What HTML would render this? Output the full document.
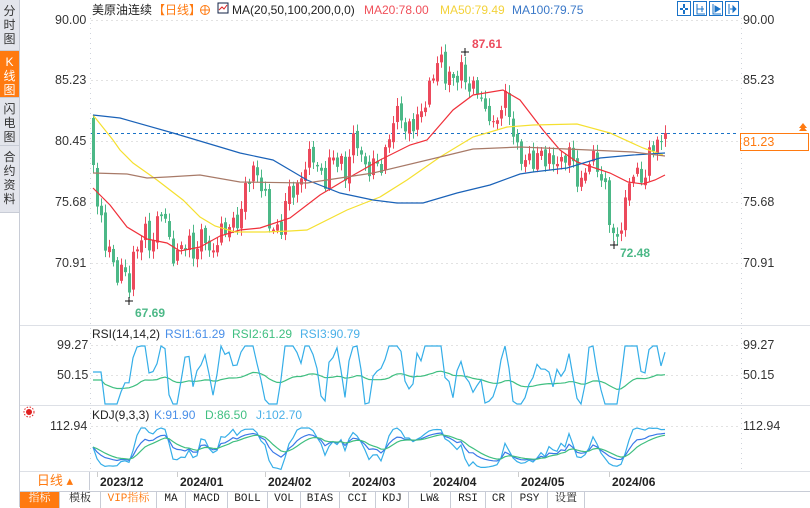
<!DOCTYPE html>
<html><head><meta charset="utf-8">
<style>
*{margin:0;padding:0;box-sizing:border-box}
body{width:810px;height:507px;overflow:hidden;background:#fff;font-family:"Liberation Sans","Noto Sans CJK SC",sans-serif;position:relative}
.side{position:absolute;left:0;top:0;width:20px;height:507px;background:#fff;border-right:1px solid #c8ccd6}
.tab{position:absolute;left:0;width:19px;background:#e3e5ec;color:#333;font-size:12px;line-height:14px;text-align:center;padding-top:4px;border-bottom:1px solid #c8ccd6}
.tab.on{background:#ff7a10;color:#fff}
.ax{position:absolute;font-size:12.5px;color:#333}
.bar{position:absolute;left:20px;top:491px;width:790px;height:16px;border-top:1px solid #c8ccd6;font-family:"Liberation Mono","Noto Serif CJK SC",monospace;font-size:11px}
.bar span{position:absolute;top:0;height:16px;line-height:15px;text-align:center;border-right:1px solid #c8ccd6;color:#222}
</style></head><body>
<div class="side">
<div class="tab" style="top:0;height:51px">分<br>时<br>图</div>
<div class="tab on" style="top:51px;height:47px">K<br>线<br>图</div>
<div class="tab" style="top:98px;height:48px">闪<br>电<br>图</div>
<div class="tab" style="top:146px;height:67px">合<br>约<br>资<br>料</div>
</div>
<svg id="s" width="810" height="507" style="position:absolute;left:0;top:0">
<g font-size="12" font-family="Liberation Sans,Noto Sans CJK SC,sans-serif">
<text x="92" y="14" fill="#222">美原油连续</text>
<text x="153" y="14" fill="#ff7a10">【日线】</text>
<circle cx="205" cy="10" r="4.5" fill="none" stroke="#ff7a10"/><path d="M200.5 10h9M205 5.5v9" stroke="#ff7a10"/>
<rect x="218" y="3" width="10" height="10" fill="#fff" stroke="#124" /><path d="M219 10l3-3 2 2 3-4" stroke="#d22" fill="none"/>
<text x="232" y="14" fill="#222">MA(20,50,100,200,0,0)</text>
<text x="364" y="14" fill="#f0505a">MA20:78.00</text>
<text x="440" y="14" fill="#f3d23a">MA50:79.49</text>
<text x="512" y="14" fill="#3a78c8">MA100:79.75</text>
<text x="92" y="338" fill="#222">RSI(14,14,2)</text>
<text x="165" y="338" fill="#4a8fe8">RSI1:61.29</text>
<text x="232" y="338" fill="#3fbf80">RSI2:61.29</text>
<text x="300" y="338" fill="#4ab0e8">RSI3:90.79</text>
<text x="92" y="419" fill="#222">KDJ(9,3,3)</text>
<text x="154" y="419" fill="#4a8fe8">K:91.90</text>
<text x="205" y="419" fill="#3fbf80">D:86.50</text>
<text x="256" y="419" fill="#4ab0e8">J:102.70</text>
</g>
<g fill="none" stroke="#1a73c8" stroke-width="1">
<rect x="677.5" y="1.5" width="13" height="14"/><rect x="693.5" y="1.5" width="13" height="14"/><rect x="709.5" y="1.5" width="13" height="14"/><rect x="725.5" y="1.5" width="13" height="14"/>
<path d="M684 4v4M684 10v4M680 9h3M685 9h3" stroke-width="2"/>
<path d="M697 4v10h8M697 9h7M702 6v6"/>
<path d="M713 4v10h8"/><path d="M715 6l5 3-5 3z" fill="#1a73c8"/>
<path d="M729 4v10"/><path d="M730 9h5M733 6l3 3-3 3z" fill="#1a73c8"/>
</g>
<g id="grid"></g>
<g id="ch"></g>
</svg>
<div class="ax" style="left:55px;top:13px">90.00</div>
<div class="ax" style="left:55px;top:73px">85.23</div>
<div class="ax" style="left:55px;top:134px">80.45</div>
<div class="ax" style="left:55px;top:195px">75.68</div>
<div class="ax" style="left:55px;top:256px">70.91</div>
<div class="ax" style="left:57px;top:338px">99.27</div>
<div class="ax" style="left:57px;top:368px">50.15</div>
<div class="ax" style="left:50px;top:419px">112.94</div>
<div class="ax" style="left:743px;top:13px">90.00</div>
<div class="ax" style="left:743px;top:73px">85.23</div>
<div class="ax" style="left:743px;top:195px">75.68</div>
<div class="ax" style="left:743px;top:256px">70.91</div>
<div class="ax" style="left:743px;top:338px">99.27</div>
<div class="ax" style="left:743px;top:368px">50.15</div>
<div class="ax" style="left:743px;top:419px">112.94</div>
<div style="position:absolute;left:740px;top:133px;width:69px;height:18px;border:1px solid #ff7a10;color:#ff7a10;font-size:12.5px;padding:1px 0 0 2px">81.23</div>
<div style="position:absolute;left:21px;top:472px;width:69px;height:18px;border-right:1px solid #c8ccd6;color:#ff7a10;font-size:13px;text-align:center;line-height:18px">日线 ▴</div>
<div class="bar">
<span style="left:0;width:40px;background:#ff7a10;color:#fff">指标</span>
<span style="left:40px;width:41px">模板</span>
<span style="left:81px;width:56px;color:#ff7a10">VIP指标</span>
<span style="left:137px;width:29px">MA</span>
<span style="left:166px;width:42px">MACD</span>
<span style="left:208px;width:40px">BOLL</span>
<span style="left:248px;width:33px">VOL</span>
<span style="left:281px;width:39px">BIAS</span>
<span style="left:320px;width:36px">CCI</span>
<span style="left:356px;width:33px">KDJ</span>
<span style="left:389px;width:42px">LW&amp;</span>
<span style="left:431px;width:35px">RSI</span>
<span style="left:466px;width:26px">CR</span>
<span style="left:492px;width:36px">PSY</span>
<span style="left:528px;width:37px">设置</span>
</div>
<script>
(function(){
var NS="http://www.w3.org/2000/svg";
function el(p,t,a){var e=document.createElementNS(NS,t);for(var k in a)e.setAttribute(k,a[k]);p.appendChild(e);return e;}
var G=document.getElementById('grid'),C=document.getElementById('ch');
[20,80,141,202,263,345,375,426].forEach(function(y){el(G,'line',{x1:91,x2:738,y1:y+.5,y2:y+.5,stroke:'#e2e2e2','stroke-dasharray':'2,3'});});
[325,405,471].forEach(function(y){el(G,'line',{x1:20,x2:810,y1:y+.5,y2:y+.5,stroke:'#dde0e6'});});
el(G,'line',{x1:90.5,x2:90.5,y1:18,y2:471,stroke:'#d0d4dc','stroke-dasharray':'1,4'});
el(G,'line',{x1:741.5,x2:741.5,y1:18,y2:471,stroke:'#d0d4dc','stroke-dasharray':'1,4'});
el(G,'line',{x1:91,x2:738,y1:133.5,y2:133.5,stroke:'#1a73c8','stroke-dasharray':'3,3'});
el(G,'path',{d:'M799 131l4-5 4 5zM799 128l4-5 4 5z',fill:'#ff7a10'});
var dates=[[100,'2023/12'],[180,'2024/01'],[268,'2024/02'],[352,'2024/03'],[433,'2024/04'],[521,'2024/05'],[612,'2024/06']];
dates.forEach(function(d){el(G,'line',{x1:d[0]-2.5,x2:d[0]-2.5,y1:472,y2:477,stroke:'#ccc'});var t=el(G,'text',{x:d[0],y:486,'font-size':12,'font-weight':'bold',fill:'#222'});t.textContent=d[1];});
var A=[93,165,97,205,101,225,105,245,110,240,115,285,120,270,125,275,129,282,133,255,137,250,141,240,145,232,150,245,155,230,160,210,165,225,170,240,175,262,180,245,185,250,190,240,195,255,200,235,205,240,210,260,215,240,220,230,225,235,230,225,240,215,245,190,250,178,255,165,260,180,265,200,270,235,275,225,280,230,285,205,290,190,295,195,300,175,305,165,310,158,315,162,320,170,325,180,330,160,335,165,340,155,345,175,350,150,355,140,360,150,365,165,370,170,375,165,380,170,385,150,390,130,395,120,400,110,405,130,410,120,415,130,420,115,425,100,430,80,435,70,440,60,445,75,450,70,455,85,460,70,465,80,470,85,475,85,480,100,485,115,490,110,495,130,500,110,505,100,510,115,515,140,520,160,525,165,530,155,535,160,540,150,545,165,550,160,555,155,560,165,565,160,570,150,575,170,580,185,585,175,590,160,595,155,600,175,605,190,610,230,615,242,620,225,625,205,630,180,635,172,640,172,645,178,650,150,655,145,660,140,665,133];
function interp(arr,x){for(var i=0;i<arr.length-2;i+=2){if(x<=arr[i+2]){var t=(x-arr[i])/(arr[i+2]-arr[i]);return arr[i+1]+t*(arr[i+3]-arr[i+1]);}}return arr[arr.length-1];}
var cl=[],xs=[];
for(var x=93,i=0;x<=666;x+=4,i++){var c=interp(A,x)+7*Math.sin(i*2.3)+4*Math.sin(i*5.1);if(x>=662)c=133;xs.push(x);cl.push(c);}
for(var i=0;i<cl.length;i++){var o=i==0?118:cl[i-1]+3*Math.sin(i*1.7);var c=cl[i];var up=c<o;var col=up?'#ec4a5c':'#4cb887';var bt=Math.min(o,c),bb=Math.max(o,c);if(bb-bt<1){bb=bt+1;}
var hi=bt-2-Math.abs(6*Math.sin(i*3.7)),lo=bb+2+Math.abs(6*Math.cos(i*2.9));
el(C,'line',{x1:xs[i]+.5,x2:xs[i]+.5,y1:hi,y2:lo,stroke:col});
el(C,'rect',{x:xs[i]-1,y:bt,width:3,height:bb-bt,fill:col});}
function pl(pts,col){el(C,'polyline',{points:pts,fill:'none',stroke:col,'stroke-width':1.2});}
pl('93,188 110,205 127,227 147,239 167,243 180,251 200,247 220,236 240,230 260,228 290,218 320,195 350,177 380,160 410,145 427,140 440,125 453,110 473,95 503,90 520,100 543,130 560,150 577,162 595,168 610,173 628,182 643,184 655,180 665,175','#f0303a');
pl('93,115 113,140 120,150 133,163 157,180 183,200 200,217 215,226 235,232 265,232 290,231 307,230 347,210 380,197 407,180 440,157 473,137 507,127 533,125 577,124 610,133 643,148 663,155','#f5e030');
pl('93,115 120,118 173,133 230,150 240,153 273,160 307,180 340,193 373,200 397,203 423,203 457,193 490,185 520,174 533,172 567,168 600,158 633,155 665,153','#1a62b8');
pl('93,173 127,174 147,178 167,177 200,175 240,182 307,183 373,173 440,157 473,149 520,147 567,149 633,152 665,156','#a87a68');
function tx(x,y,s,c){var t=el(C,'text',{x:x,y:y,'font-size':12,'font-weight':'bold',fill:c});t.textContent=s;}
tx(472,48,'87.61','#ec4a5c');tx(135,317,'67.69','#4cb887');tx(620,257,'72.48','#4cb887');
el(C,'path',{d:'M461 52h8M465 48v8M125 301h8M129 297v8M610 245h8M614 241v8',stroke:'#111'});
var r1=[],r2=[],kk=[],dd=[],jj=[];var g=380,K=50,D=50;
function ky(q){return Math.max(428,Math.min(470,462-q*0.3));}
for(var i=0;i<cl.length;i++){var ch=i>=3?(cl[i-3]-cl[i]):0;var v=372-ch*1.1;v=Math.max(346,Math.min(404,v));r1.push(xs[i]+','+v.toFixed(1));g=g*0.9+(380-ch*0.5)*0.1;r2.push(xs[i]+','+g.toFixed(1));
var a=Math.max(0,i-8),hh=1e9,ll=-1e9;for(var j=a;j<=i;j++){hh=Math.min(hh,cl[j]);ll=Math.max(ll,cl[j]);}var rsv=ll-hh<1?50:(ll-cl[i])/(ll-hh)*100;K=K*2/3+rsv/3;D=D*2/3+K/3;var J=3*K-2*D;
kk.push(xs[i]+','+ky(K).toFixed(1));dd.push(xs[i]+','+ky(D).toFixed(1));jj.push(xs[i]+','+ky(J).toFixed(1));}
pl(r2.join(' '),'#3fbf80');pl(r1.join(' '),'#35aee8');
pl(jj.join(' '),'#35aee8');pl(kk.join(' '),'#3a78e8');pl(dd.join(' '),'#3fbf80');
el(C,'circle',{cx:29,cy:412,r:3,fill:'#e02020'});el(C,'circle',{cx:29,cy:412,r:5,fill:'none',stroke:'#e02020','stroke-dasharray':'1.5,1.5'});
})();
</script>
</body></html>
